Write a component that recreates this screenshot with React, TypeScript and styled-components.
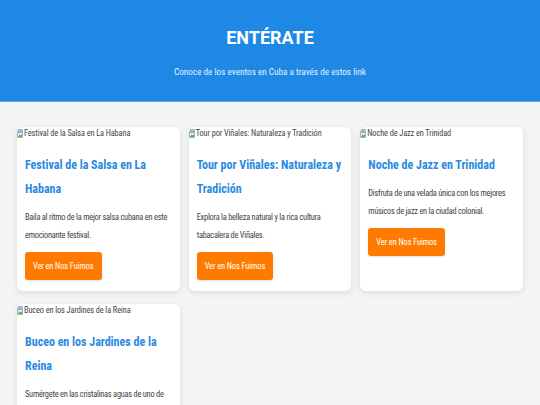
import React from 'react';
import styled, { createGlobalStyle } from 'styled-components';

const GlobalStyle = createGlobalStyle`
  html, body {
    margin: 0;
    padding: 0;
    background: #f4f4f4;
    font-family: 'Roboto Condensed', Roboto, 'Liberation Sans', sans-serif;
    font-weight: 400;
    color: #333;
  }
`;

const Header = styled.header`
  background: #1e88e5;
  border-bottom: 1px solid #5ea9ef;
  padding: 27px 20px 22px;
  text-align: center;
  color: white;
`;

const HeaderTitle = styled.h1`
  margin: 0;
  font-family: Roboto, 'Liberation Sans', sans-serif;
  font-size: 18px;
  line-height: 22px;
  font-weight: 700;
`;

const HeaderSubtitle = styled.p`
  margin: 16px 0 0;
  font-size: 9.2px;
  line-height: 14px;
  color: #e3f0fc;
`;

const EventGrid = styled.main`
  display: grid;
  grid-template-columns: repeat(3, 1fr);
  column-gap: 9px;
  row-gap: 13px;
  padding: 25px 17px;
`;

const Card = styled.article`
  display: flex;
  flex-direction: column;
  background: white;
  border-radius: 6px;
  box-shadow: 0 2px 6px rgba(0, 0, 0, 0.1);
  overflow: hidden;
`;

const ImageAlt = styled.div`
  display: flex;
  align-items: center;
  gap: 1px;
  height: 12px;
  font-size: 8.3px;
  font-weight: 400;
  letter-spacing: -0.1px;
  color: #444;
  white-space: nowrap;
`;

const CardBody = styled.div`
  display: flex;
  flex-direction: column;
  align-items: flex-start;
  padding: 14px 8px 11px;
`;

const CardTitle = styled.h3`
  margin: 0 0 7px;
  font-size: 12px;
  line-height: 24px;
  font-weight: 700;
  color: #2a8ae0;
`;

const CardText = styled.p`
  margin: 0 0 8px;
  font-size: 8.4px;
  letter-spacing: -0.25px;
  line-height: 18px;
  color: #444;
`;

const CardButton = styled.a`
  display: inline-flex;
  align-items: center;
  height: 28px;
  padding: 0 8px;
  border-radius: 3px;
  background: #ff7a00;
  color: #fff;
  font-size: 8.4px;
  font-weight: 400;
  letter-spacing: -0.1px;
  text-decoration: none;
  box-shadow: 0 1px 2px rgba(0, 0, 0, 0.12);
`;

const BrokenImage = () => (
  <svg width="6" height="9" viewBox="0 0 6 9">
    <path d="M0.5 0.5h5v8h-5z" fill="#fff" stroke="#9a9a9a" strokeWidth="0.8" />
    <path d="M1 8l1.6-3 1.2 1.6L5 5v3z" fill="#5bb04f" />
    <rect x="1" y="1.2" width="4" height="3" fill="#7ab7e8" />
  </svg>
);

interface EventItem {
  id: number;
  title: string;
  description: string;
}

const events: EventItem[] = [
  {
    id: 1,
    title: 'Festival de la Salsa en La Habana',
    description: 'Baila al ritmo de la mejor salsa cubana en este emocionante festival.',
  },
  {
    id: 2,
    title: 'Tour por Viñales: Naturaleza y Tradición',
    description: 'Explora la belleza natural y la rica cultura tabacalera de Viñales.',
  },
  {
    id: 3,
    title: 'Noche de Jazz en Trinidad',
    description: 'Disfruta de una velada única con los mejores músicos de jazz en la ciudad colonial.',
  },
  {
    id: 4,
    title: 'Buceo en los Jardines de la Reina',
    description:
      'Sumérgete en las cristalinas aguas de uno de los arrecifes mejor conservados del Caribe.',
  },
];

const EventCard: React.FC<{ event: EventItem }> = ({ event }) => (
  <Card data-testid={`card-event-${event.id}`}>
    <ImageAlt role="img" aria-label={event.title}>
      <BrokenImage />
      {event.title}
    </ImageAlt>
    <CardBody>
      <CardTitle>{event.title}</CardTitle>
      <CardText>{event.description}</CardText>
      <CardButton href="#">Ver en Nos Fuimos</CardButton>
    </CardBody>
  </Card>
);

const App: React.FC = () => (
  <>
    <GlobalStyle />
    <Header>
      <HeaderTitle>ENTÉRATE</HeaderTitle>
      <HeaderSubtitle>Conoce de los eventos en Cuba a través de estos link</HeaderSubtitle>
    </Header>
    <EventGrid>
      {events.map((event) => (
        <EventCard key={event.id} event={event} />
      ))}
    </EventGrid>
  </>
);

export default App;
